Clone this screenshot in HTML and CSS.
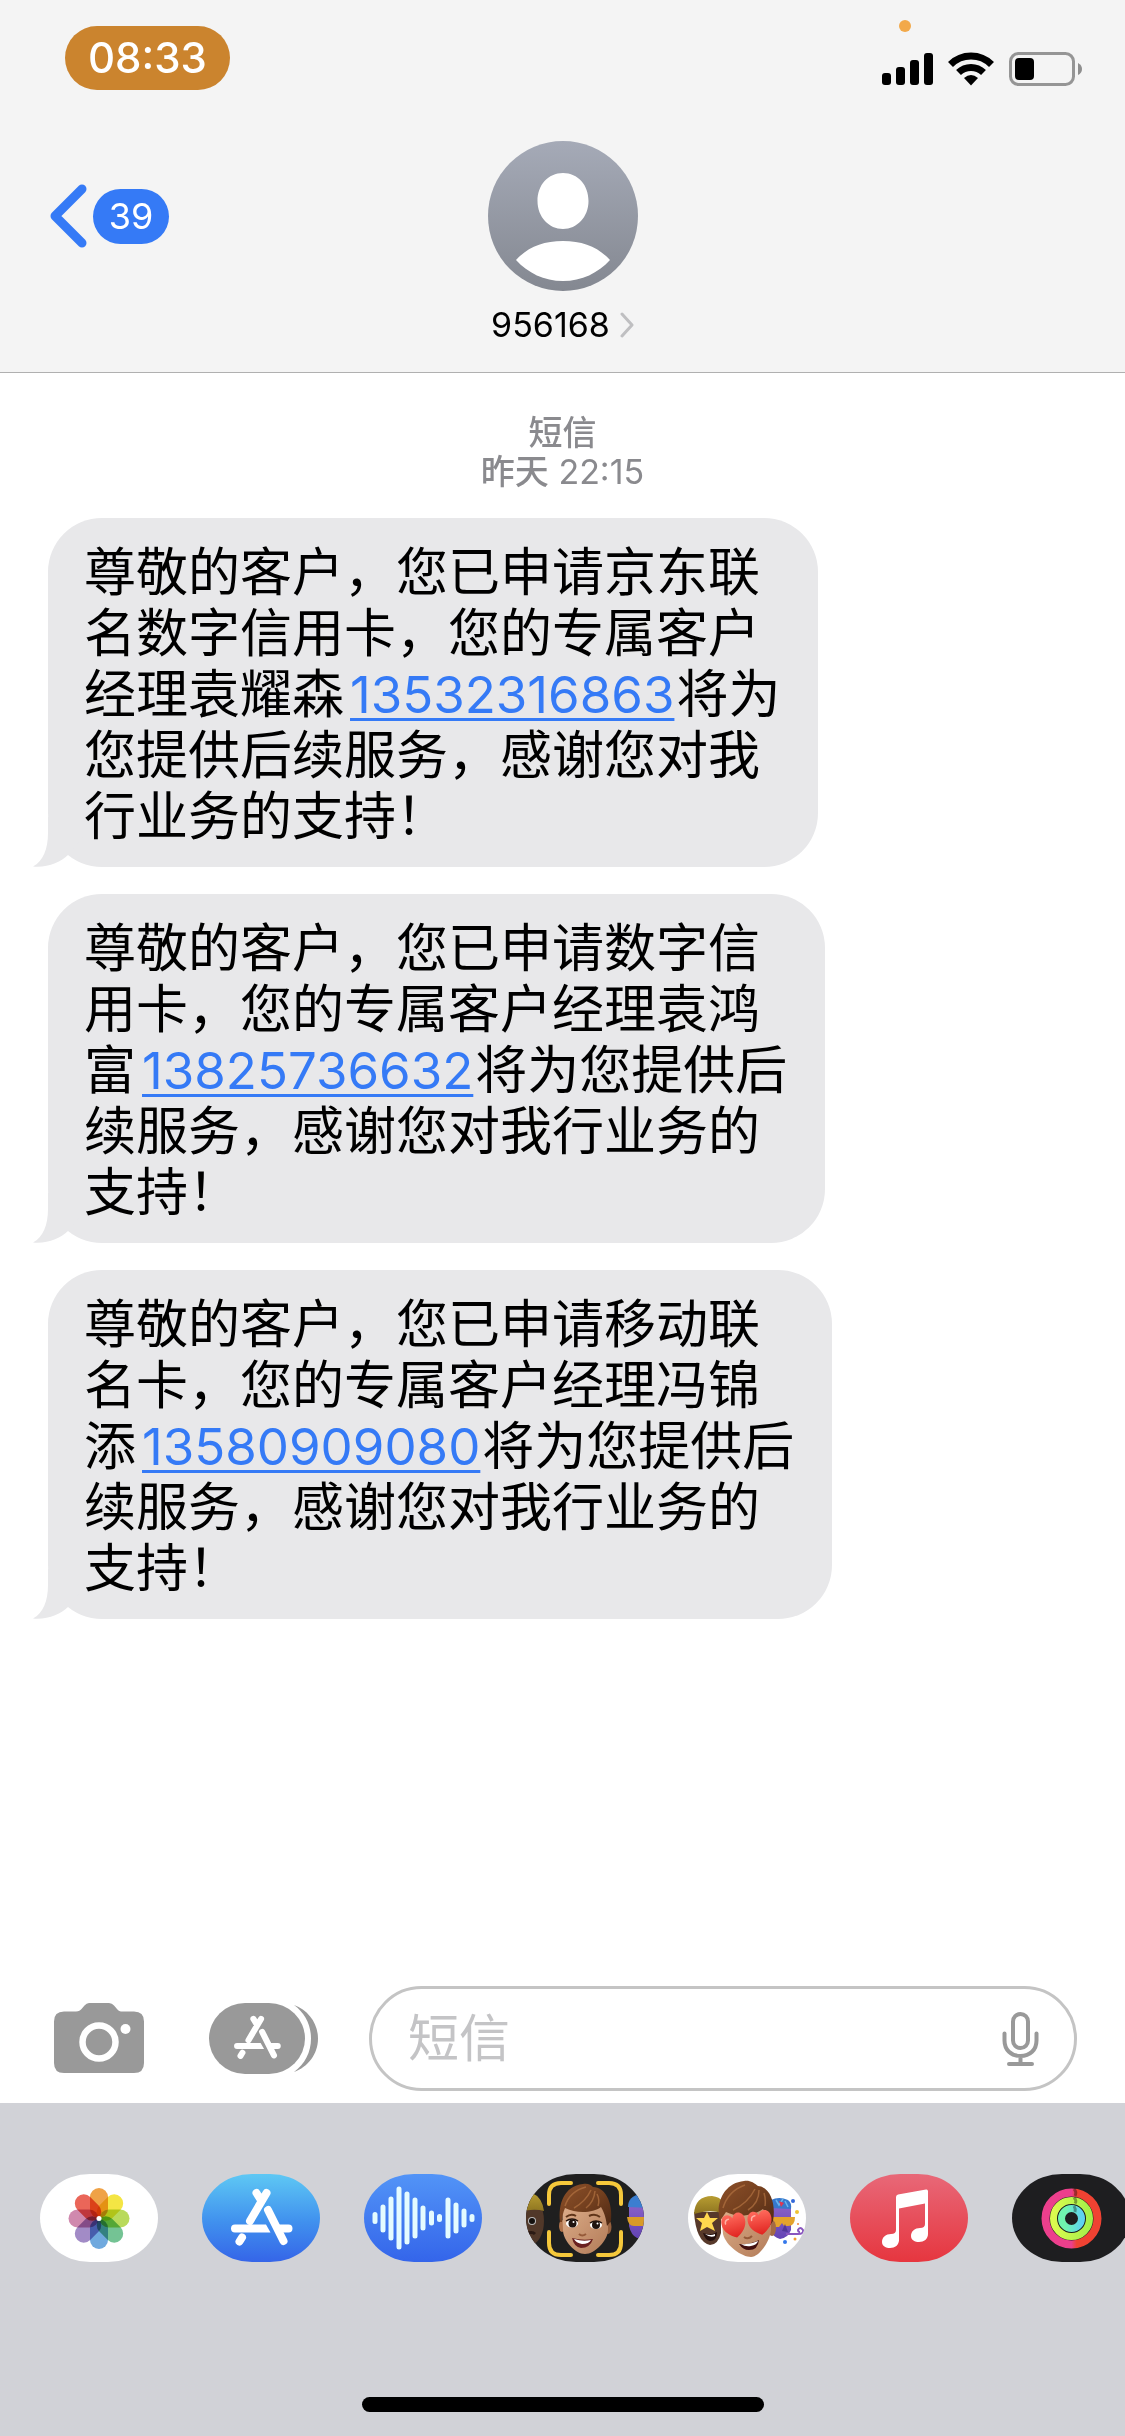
FILE: index.html
```html
<!DOCTYPE html>
<html lang="zh-CN">
<head>
<meta charset="utf-8">
<meta name="viewport" content="width=device-width, initial-scale=1">
<title>956168</title>
<link rel="stylesheet" href="styles.css">
</head>
<body>
<svg class="defs" width="0" height="0" aria-hidden="true">
  <defs>
    <linearGradient id="g-avatar" x1="0" y1="0" x2="0" y2="1"><stop offset="0" stop-color="#a5aab7"/><stop offset="1" stop-color="#848891"/></linearGradient>
    <linearGradient id="g-skin" x1="0" y1="0" x2="1" y2="1"><stop offset="0" stop-color="#deae8a"/><stop offset="1" stop-color="#b27b58"/></linearGradient>
    <linearGradient id="g-hair" x1="0" y1="0" x2="1" y2="1"><stop offset="0" stop-color="#8d5029"/><stop offset=".5" stop-color="#74401f"/><stop offset="1" stop-color="#4c2713"/></linearGradient>
    <linearGradient id="g-heart" x1="0" y1="0" x2="0" y2="1"><stop offset="0" stop-color="#ff6a5c"/><stop offset="1" stop-color="#e0231f"/></linearGradient>
    <linearGradient id="g-cap" x1="0" y1="0" x2="0" y2="1"><stop offset="0" stop-color="#b89d32"/><stop offset="1" stop-color="#8d7420"/></linearGradient>
    <linearGradient id="g-violet" x1="0" y1="0" x2="0" y2="1"><stop offset="0" stop-color="#8760c6"/><stop offset="1" stop-color="#6243b4"/></linearGradient>
    <linearGradient id="g-move"><stop offset=".5" stop-color="#ec3f8c"/><stop offset=".6" stop-color="#f04232"/></linearGradient>
    <linearGradient id="g-train"><stop offset="0" stop-color="#dcfb4e"/><stop offset="1" stop-color="#a4f04a"/></linearGradient>
    <linearGradient id="g-stand"><stop offset=".2" stop-color="#6ff5ae"/><stop offset="1" stop-color="#5fd2f0"/></linearGradient>
    <g id="store-glyph">
      <g fill="none" stroke="currentColor" stroke-width="8" stroke-linecap="round">
        <path d="M64.500 19 48 47M54.500 19l5 8M40 63.500l-2.500 4M66 36l15.500 31"/>
      </g>
      <path fill="currentColor" d="M33 50.500h31l4.500 8H33a4 4 0 0 1 0-8zM73 50.500h13.500a4 4 0 0 1 0 8H77z"/>
    </g>
    <g id="heart"><path fill="url(#g-heart)" d="M0 13C-7 9-12 4-12-3c0-9 9-11 12-4 3-7 12-5 12 4 0 7-5 12-12 16z"/><path d="M-8-3q0-4 4-4" fill="none" stroke="#ffb0a4" stroke-width="1.500" stroke-linecap="round"/></g>
  </defs>
</svg>

<header class="header">
  <div class="status-bar">
    <time class="clock">08:33</time>
    <div class="indicators">
      <span class="mic-dot"></span>
      <svg width="51" height="34" viewBox="0 0 51 34" role="img" aria-label="信号"><rect y="21" width="9" height="12" rx="3"/><rect x="14" y="15" width="9" height="18" rx="3"/><rect x="28" y="8" width="9" height="25" rx="3"/><rect x="42" y="1" width="9" height="32" rx="3"/></svg>
      <svg width="46" height="34" viewBox="0 0 46 34" role="img" aria-label="无线网络"><g fill="none" stroke="#000" stroke-width="7"><path d="M2.500 12.500a29 29 0 0 1 41 0"/><path d="M10.500 20.500a18 18 0 0 1 25 0"/></g><path d="M16 26q7-6 14 0l-7 7.500z"/></svg>
      <svg width="73" height="34" viewBox="0 0 73 34" role="img" aria-label="电池"><rect x="1.500" y="1.500" width="63" height="31" rx="8" fill="none" stroke="#959595" stroke-width="3"/><rect x="6" y="6" width="19" height="22" rx="4"/><path fill="#8e8e8e" d="M69 11q4 2 4 6t-4 6z"/></svg>
    </div>
  </div>
  <nav class="nav">
    <button class="back" type="button" aria-label="返回">
      <svg width="38" height="64" viewBox="0 0 38 64" aria-hidden="true"><path d="M33 5 6 32l27 27" fill="none" stroke="#357af6" stroke-width="9" stroke-linecap="round" stroke-linejoin="round"/></svg>
      <span class="badge">39</span>
    </button>
    <button class="contact" type="button">
      <svg width="150" height="150" viewBox="0 0 150 150" aria-hidden="true"><circle cx="75" cy="75" r="75" fill="url(#g-avatar)"/><path fill="#fff" d="M75 32c15 0 25.500 12 25.500 28S89 88 75 88 49.500 76 49.500 60 60 32 75 32zM28 119c12-13 27-19 47-19s35 6 47 19c-12 13-28 21-47 21s-35-8-47-21z"/></svg>
      <span class="contact-name">956168<svg width="14" height="26" viewBox="0 0 14 26" aria-hidden="true"><path d="m2 2 10 11L2 24" fill="none" stroke="#bfbfc1" stroke-width="3" stroke-linecap="round" stroke-linejoin="round"/></svg></span>
    </button>
  </nav>
</header>

<main class="thread">
  <p class="stamp"><b>短信</b><br><b>昨天</b> 22:15</p>
  <p class="bubble">尊敬的客户，您已申请京东联<br>名数字信用卡，您的专属客户<br>经理袁耀森<a href="tel:13532316863">13532316863</a>将为<br>您提供后续服务，感谢您对我<br>行业务的支持！<svg class="tail" width="50" height="50" viewBox="0 0 50 50" aria-hidden="true"><path d="M15 0v16c0 16-5 28-15 33.500C14 51 28 45 35 38L50 20V0z"/></svg></p>
  <p class="bubble">尊敬的客户，您已申请数字信<br>用卡，您的专属客户经理袁鸿<br>富<a href="tel:13825736632">13825736632</a>将为您提供后<br>续服务，感谢您对我行业务的<br>支持！<svg class="tail" width="50" height="50" viewBox="0 0 50 50" aria-hidden="true"><path d="M15 0v16c0 16-5 28-15 33.500C14 51 28 45 35 38L50 20V0z"/></svg></p>
  <p class="bubble">尊敬的客户，您已申请移动联<br>名卡，您的专属客户经理冯锦<br>添<a href="tel:13580909080">13580909080</a>将为您提供后<br>续服务，感谢您对我行业务的<br>支持！<svg class="tail" width="50" height="50" viewBox="0 0 50 50" aria-hidden="true"><path d="M15 0v16c0 16-5 28-15 33.500C14 51 28 45 35 38L50 20V0z"/></svg></p>
</main>

<form class="composer">
  <button type="button" aria-label="相机">
    <svg width="90" height="71" viewBox="0 0 90 71" aria-hidden="true"><path fill="#999" d="M10 8.500h12c3 0 4-1 5.500-2.500l3-3.500Q32.500 0 35 0h20q3 0 5 2.500l3 3.500c1.500 2 3 2.500 5.500 2.500H80q10 0 10 10V60q0 10-10 10H10Q0 70 0 60V18.500q0-10 10-10z"/><circle cx="45" cy="39" r="16.500" fill="none" stroke="#fff" stroke-width="6.500"/><circle cx="71.500" cy="26" r="5" fill="#fff"/></svg>
  </button>
  <button type="button" aria-label="应用">
    <svg class="apps-icon" width="109" height="71" viewBox="0 0 109 71" aria-hidden="true"><rect width="96" height="71" rx="36" fill="#999"/><path fill="#999" d="M85 2c14 5 24 18 24 33.500S99 64 85 69c11-8 17-20 17-33.500S96 10 85 2z"/><use href="#store-glyph" transform="translate(3 1.500) scale(.76)"/></svg>
  </button>
  <div class="field">
    <input type="text" placeholder="短信" aria-label="短信">
    <button type="button" aria-label="听写">
      <svg width="37" height="54" viewBox="0 0 37 54" fill="none" stroke="#999" stroke-width="4" stroke-linecap="round" aria-hidden="true"><rect x="11" y="2" width="15" height="34" rx="7.500"/><path d="M2.500 21.500v7C2.500 38 9 44 18.500 44s16-6 16-15.500v-7M18.500 44v8M7 52h23"/></svg>
    </button>
  </div>
</form>

<footer class="drawer">
  <div class="apps">
    <button class="app app-photos" type="button" aria-label="照片">
      <svg viewBox="0 0 118 88" aria-hidden="true"><g class="petals">
        <rect x="50" y="14" width="18" height="30" rx="9" fill="#efa247"/>
        <rect x="50" y="14" width="18" height="30" rx="9" fill="#f4e544" transform="rotate(45 59 44.500)"/>
        <rect x="50" y="14" width="18" height="30" rx="9" fill="#b9da5c" transform="rotate(90 59 44.500)"/>
        <rect x="50" y="14" width="18" height="30" rx="9" fill="#74c394" transform="rotate(135 59 44.500)"/>
        <rect x="50" y="14" width="18" height="30" rx="9" fill="#70a9de" transform="rotate(180 59 44.500)"/>
        <rect x="50" y="14" width="18" height="30" rx="9" fill="#a28bc6" transform="rotate(225 59 44.500)"/>
        <rect x="50" y="14" width="18" height="30" rx="9" fill="#d089ae" transform="rotate(270 59 44.500)"/>
        <rect x="50" y="14" width="18" height="30" rx="9" fill="#ea6659" transform="rotate(315 59 44.500)"/>
      </g><circle cx="59" cy="44.500" r="2.500" fill="#fff"/></svg>
    </button>
    <button class="app app-store" type="button" aria-label="App Store">
      <svg viewBox="0 0 118 88" aria-hidden="true"><use href="#store-glyph"/></svg>
    </button>
    <button class="app app-audio" type="button" aria-label="音频">
      <svg viewBox="0 0 118 88" aria-hidden="true"><path fill="none" stroke="#e4fbff" stroke-width="5" stroke-linecap="round" d="M11 40.500v7M19 33v23M27 25v39M35 15v58M43 20v48M51 26v36M59 34v20M67.500 39v10M75.500 42.500v3M84 26v36M92 31v26M100 37v14M108 42.500v3"/></svg>
    </button>
    <button class="app app-memoji" type="button" aria-label="拟我表情">
      <svg viewBox="0 0 118 88" aria-hidden="true">
        <ellipse cx="4" cy="47" rx="14" ry="24" fill="#513829"/><path d="M-8 38Q-6 19 6 19q10 4 12 18-10-3-26 1z" fill="url(#g-cap)"/><circle cx="6" cy="47" r="4" fill="#bbb"/><circle cx="6" cy="47" r="3" fill="#15110f"/><path d="M0 60q6-3 9 0" stroke="#2b1a14" stroke-width="3" fill="none"/>
        <path d="M103 32h18v32h-10q-6-3-8-12z" fill="url(#g-violet)"/><path d="M102 33q0-11 13-13l8 2v12z" fill="#3b7ed0"/><path d="M101 43h20v9h-13q-6 0-7-9z" fill="#d89b27"/>
        <ellipse cx="36" cy="52" rx="3" ry="6" fill="#b0744d"/><ellipse cx="82" cy="53" rx="3.500" ry="7" fill="#96603e"/>
        <path d="M36 34q23-10 46 0v22c0 10-13 24-23 24S37 66 37 56z" fill="url(#g-skin)"/>
        <path d="M34 48C32 30 38 12 57 10c5-1 8 1 10 3 12 0 20 15 18 34l-4 5c-1-7-2-12-6-19-8 6-24 7-36 1-2 5-3 9-3 14z" fill="url(#g-hair)"/>
        <path d="M39 32Q44 17 60 13M48 34Q60 27 65 16M60 34q8-6 9-17M72 32q2-6-1-12" stroke="#b27242" stroke-width="1.500" fill="none" opacity=".7"/>
        <path d="M40 43q5-4 10-1M63 42q6-3 11 1" stroke="#603519" stroke-width="2" fill="none"/>
        <ellipse cx="46" cy="49.500" rx="6" ry="4" fill="#fff"/><ellipse cx="70" cy="51" rx="6" ry="4" fill="#fff"/><circle cx="46.500" cy="49.500" r="4" fill="#1e130f"/><circle cx="70" cy="51" r="4" fill="#1e130f"/><path d="M40 47q6-4 12 0M64 49q6-4 12 0" stroke="#21120c" stroke-width="1.500" fill="none"/><circle cx="47.500" cy="48" r="1" fill="#fff"/><circle cx="71.500" cy="49.500" r="1" fill="#fff"/>
        <path d="M53 60q3 3 7 0" stroke="#955a39" stroke-width="2" fill="none"/><path d="M46 64q11 3 21 1-3 9-12 9-7-1-9-10z" fill="#6a201f"/><path d="M48 65q9 3 17 1-2 4-9 4-6-1-8-5z" fill="#fff"/>
        <path d="M23 30v-9q0-12 12-12h10M72 9h11q12 0 12 12v9M95 58v11q0 12-12 12H72M45 81H35q-12 0-12-12V58" fill="none" stroke="#f5c83b" stroke-width="4" stroke-linecap="round"/>
      </svg>
    </button>
    <button class="app app-stickers" type="button" aria-label="拟我表情贴纸">
      <svg viewBox="0 0 118 88" aria-hidden="true">
        <path d="M6 38h27v21q-3 12-11 12Q8 68 6 38z" fill="#57392a"/><path d="M6 40Q7 22 24 22q8 1 10 5v12q-13-4-28 1z" fill="url(#g-cap)"/><path d="m19 38 3 6 8 0-6 5 3 8-8-4-7 4 2-8-6-5h8z" fill="#ffd84e"/><path d="M15 59q8 3 14-1 0 9-7 9-5-1-7-8z" fill="#24100d"/><path d="M17 60q6 2 10 0v2q-5 2-10-2z" fill="#fff"/>
        <path d="M83 34h20v22q-3 8-11 9-7-2-9-8z" fill="url(#g-violet)"/><path d="M83 34V26q8-4 17 0 4 3 3 9z" fill="#3778cc"/><path d="m88 26 3 5 4-6M97 27l3 6" stroke="#67b4ed" stroke-width="1.500" fill="none"/><path d="m91 27 5 2-3 4z" fill="#df3851"/><path d="M84 43h23q0 9-7 9h-4l-2-3-3 4h-7z" fill="#e4a32c"/><path d="m97 50-3 7 6 1" fill="#503698"/><path d="M98 60h12q6 0 5-4-3-4-5 0 0 2 2 2" fill="none" stroke="#8956bf" stroke-width="2"/>
        <circle cx="105" cy="27" r="2" fill="#3469da"/><circle cx="109" cy="38" r="2" fill="#f0c332"/><circle cx="107" cy="65" r="1.500" fill="#f29b32"/><circle cx="97" cy="68" r="2" fill="#3478eb"/><circle cx="110" cy="50" r="1" fill="#f08538"/>
        <ellipse cx="84" cy="54" rx="4" ry="8" fill="#a36a45"/><path d="M33 37q25-10 50 0v18c0 10-11 28-20 28S38 72 35 60z" fill="url(#g-skin)"/>
        <path d="M32 47C27 29 36 9 56 7c6-1 10 2 14 5 13 1 18 19 15 35l-4 6q-1-11-6-18c-10 7-25 9-37 3z" fill="url(#g-hair)"/><path d="M35 34Q40 17 57 11M45 36Q60 29 67 15M60 36q11-7 11-20M77 32q1-7-1-13" stroke="#b27242" stroke-width="1.500" fill="none" opacity=".7"/>
        <path d="M56 63q4 3 8-1" stroke="#955a39" stroke-width="2" fill="none"/><path d="M51 70q11 1 20-4-1 10-10 10-6 0-10-6z" fill="#43100f"/><path d="M53 70q9 1 17-3-1 4-7 5-6 1-10-2z" fill="#fff"/>
        <use href="#heart" transform="translate(46 51) rotate(-14)"/><use href="#heart" transform="translate(72 48) rotate(-10)"/>
      </svg>
    </button>
    <button class="app app-music" type="button" aria-label="音乐">
      <svg viewBox="0 0 118 88" fill="#fff" aria-hidden="true"><path d="M46 23q0-2 2-2.500l28-5q2-.5 2 2V60h-3V29.500L49 34.500V67h-3z"/><path d="M49 56v10c0 5-4 8-9 8-4 0-8-2-8-6 0-5 4-8 9-8q5 0 5-4zM78 50v10c0 5-4 8-9 8-4 0-8-2-8-6 0-5 4-8 9-8q5 0 5-4z"/></svg>
    </button>
    <button class="app app-fitness" type="button" aria-label="健身记录">
      <svg viewBox="0 0 118 88" fill="none" aria-hidden="true"><circle cx="59.500" cy="44.500" r="26" stroke="url(#g-move)" stroke-width="8"/><circle cx="59.500" cy="44.500" r="18" stroke="url(#g-train)" stroke-width="7"/><circle cx="59.500" cy="44.500" r="10" stroke="url(#g-stand)" stroke-width="7"/><path d="M62 15q3 3 1 7M62 23.500q3 3 1 6M62 32q2 3 1 6" stroke="#000" stroke-width="3" opacity=".35"/></svg>
    </button>
  </div>
  <div class="home-indicator"></div>
</footer>
</body>
</html>
```

FILE: styles.css
```css
* {
  box-sizing: border-box;
}

body {
  margin: 0;
  min-height: 100vh;
  display: flex;
  flex-direction: column;
  background: #fff;
  color: #000;
  font-family: Inter, "Noto Sans CJK SC", sans-serif;
}

button {
  border: 0;
  padding: 0;
  background: none;
  color: inherit;
  font: inherit;
  flex: none;
}

svg {
  display: block;
  flex: none;
}

.defs {
  position: absolute;
}

/* Header */
.header {
  background: #f4f4f4;
  border-bottom: 1px solid #b0b0b0;
}

.status-bar {
  display: flex;
  justify-content: space-between;
  align-items: flex-end;
  padding: 26px 43px 0 65px;
}

.clock {
  padding: 0 23px;
  border-radius: 32px;
  background: #cb842e;
  color: #fff;
  font-size: 42px;
  font-weight: 500;
  line-height: 64px;
}

.indicators {
  position: relative;
  display: flex;
  gap: 15px;
  padding-bottom: 4px;
}

.mic-dot {
  position: absolute;
  left: 17px;
  top: -32px;
  width: 12px;
  height: 12px;
  border-radius: 50%;
  background: #f2a94a;
}

.nav {
  display: grid;
  grid-template-columns: 1fr auto 1fr;
  align-items: start;
  padding: 51px 49px 27px;
}

.back {
  justify-self: start;
  display: flex;
  align-items: center;
  gap: 6px;
  height: 150px;
}

.badge {
  min-width: 76px;
  padding: 0 15px;
  border-radius: 28px;
  background: #357af6;
  color: #fff;
  font-size: 36px;
  line-height: 55px;
  text-align: center;
}

.contact {
  display: flex;
  flex-direction: column;
  align-items: center;
  gap: 14px;
}

.contact-name {
  display: flex;
  align-items: center;
  gap: 10px;
  font-size: 34px;
  line-height: 40px;
}

/* Conversation */
.thread {
  flex: 1;
  display: flex;
  flex-direction: column;
  align-items: flex-start;
  gap: 27px;
  padding: 40px 48px 48px;
}

.stamp {
  align-self: center;
  margin: 0;
  color: #8a8a8e;
  font-size: 34px;
  line-height: 39px;
  text-align: center;
}

.stamp b {
  font-weight: 500;
}

.bubble {
  position: relative;
  margin: 0;
  padding: 24px 38px 20px 36px;
  border-radius: 54px;
  background: #e8e8ea;
  font-size: 52px;
  line-height: 61px;
}

.bubble a {
  margin: 0 2px 0 6px;
  color: #357af6;
  font-size: 51px;
  text-decoration-thickness: 3px;
  text-underline-offset: 5px;
}

.tail {
  position: absolute;
  left: -15px;
  bottom: 0;
  fill: #e8e8ea;
}

/* Composer */
.composer {
  display: flex;
  align-items: center;
  padding: 0 48px 12px 54px;
}

.composer > button + button {
  margin-left: 65px;
}

.apps-icon {
  color: #fff;
}

.field {
  flex: 1;
  min-width: 0;
  display: flex;
  align-items: center;
  height: 105px;
  margin-left: 51px;
  padding: 0 35px 0 36px;
  border: 3px solid #c4c4c4;
  border-radius: 53px;
}

.field input {
  flex: 1;
  min-width: 0;
  border: 0;
  padding: 0;
  background: none;
  outline: 0;
  font: inherit;
  font-size: 51px;
}

.field input::placeholder {
  color: #c4c4c6;
}

/* App drawer */
.drawer {
  padding: 71px 0 24px 40px;
  overflow: hidden;
  background: #d1d2d7;
}

.apps {
  display: flex;
  gap: 44px;
}

.app {
  width: 118px;
  height: 88px;
  border-radius: 50px / 44px;
  overflow: hidden;
}

.app-photos,
.app-stickers {
  background: #fff;
}

.petals {
  isolation: isolate;
}

.petals rect {
  mix-blend-mode: multiply;
}

.app-store {
  background: linear-gradient(#5ec8f4, #4090ee 55%, #3565e8);
  color: #fff;
}

.app-audio {
  background: linear-gradient(#5294f7, #3465ea);
}

.app-memoji {
  background: #1f1f1f;
}

.app-music {
  background: linear-gradient(#e86878, #e6363f);
}

.app-fitness {
  background: #1e1e20;
}

.home-indicator {
  width: 402px;
  height: 15px;
  margin: 135px 0 0 322px;
  border-radius: 8px;
  background: #000;
}
```
